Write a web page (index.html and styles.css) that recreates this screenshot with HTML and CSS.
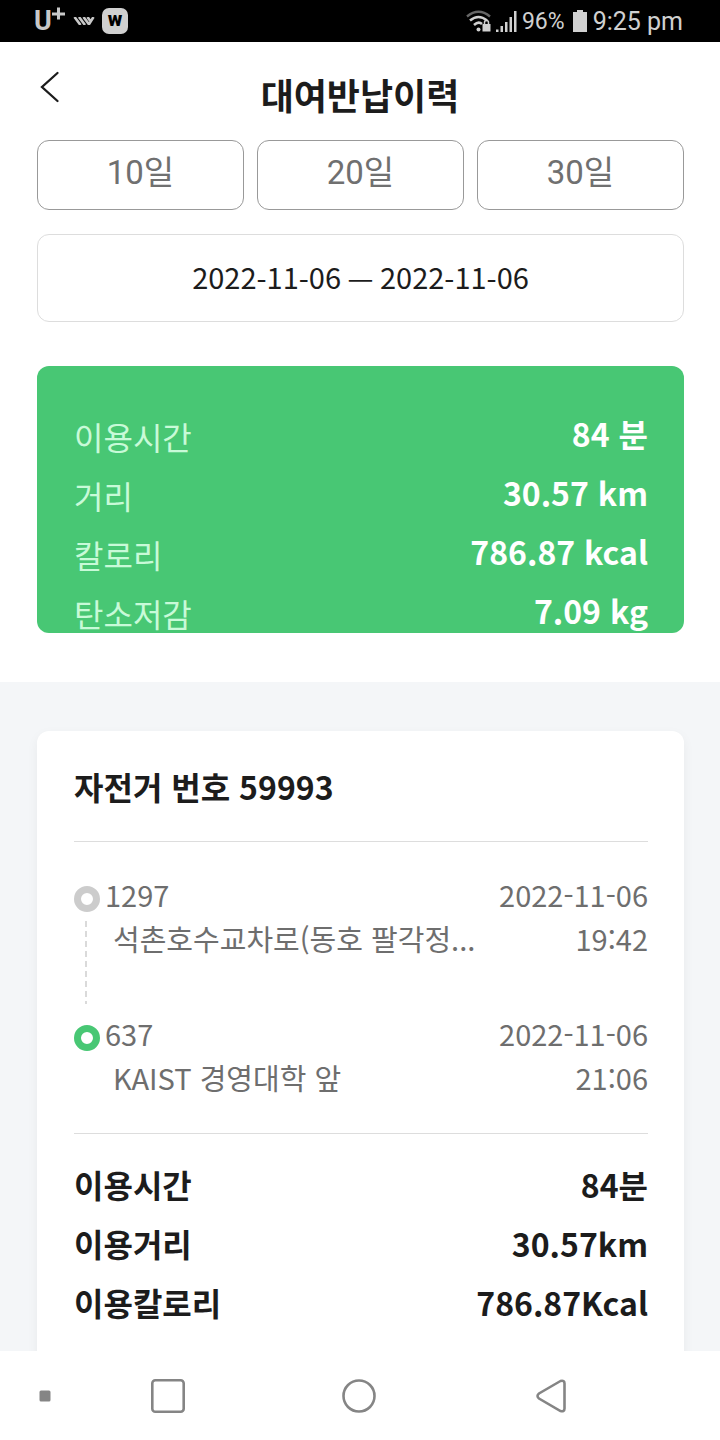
FILE: index.html
```html
<!DOCTYPE html>
<html lang="ko">
<head>
  <meta charset="utf-8">
  <meta name="viewport" content="width=device-width, initial-scale=1.0">
  <title>대여반납이력</title>
  <link rel="stylesheet" href="styles.css">
</head>
<body>
  <div class="status-bar">
    <div class="status-left">
      <div class="carrier">
        <span>U</span>
        <svg width="14" height="14" viewBox="0 0 14 14">
          <path d="M0 7h13M6.500 0.500v12" stroke="#c8c8c8" stroke-width="3"/>
        </svg>
      </div>
      <svg width="22" height="8" viewBox="0 0 22 8" stroke="#c8c8c8" stroke-width="2.600" fill="none">
        <path d="M1.500 0l6 8M6 0l6 8M10.500 0l6 8M14.500 0l3.500 5M20.500 0l-5 8"/>
      </svg>
      <svg class="badge" width="26" height="26" viewBox="0 0 26 26">
        <rect width="26" height="26" rx="7" fill="#d0d0d0"/>
        <text x="13" y="18" text-anchor="middle">w</text>
      </svg>
    </div>
    <div class="status-right">
      <svg width="25" height="22" viewBox="0 0 25 22" fill="none">
        <path d="M1 6.500Q12.500-3 24 6.500" stroke="#666" stroke-width="2.400"/>
        <path d="M4 10.500Q12.500 3.500 21 10.500M8 15Q12.500 11 16 14" stroke="#d0d0d0" stroke-width="2.600"/>
        <circle cx="12.500" cy="19.500" r="2" fill="#d0d0d0"/>
        <rect x="16.500" y="14" width="8" height="7.500" fill="#d0d0d0"/>
        <path d="M18.500 14v-1.500a2 2 0 0 1 4 0V14" stroke="#d0d0d0" stroke-width="1.500"/>
      </svg>
      <svg width="21" height="21" viewBox="0 0 21 21" fill="#d0d0d0">
        <path d="M0 18.500h2.500V21H0zM4.500 15H7v6H4.500zM9 11h2.500v10H9zM13.500 6H16v15h-2.500zM18 0h2.500v21H18z"/>
      </svg>
      <span class="battery-text">96%</span>
      <svg class="battery" width="14" height="22" viewBox="0 0 14 22" fill="#d0d0d0">
        <path d="M4 0h6v2h4v20H0V2h4z"/>
      </svg>
      <span class="clock">9:25 pm</span>
    </div>
  </div>

  <main class="content">
    <header class="header">
      <button class="back" type="button" aria-label="뒤로">
        <svg width="20" height="32" viewBox="0 0 20 32">
          <path d="M17.500 2L2 16l15.500 14" fill="none" stroke="#1c1c1c" stroke-width="2.300" stroke-linecap="round"/>
        </svg>
      </button>
      <h1 class="title">대여반납이력</h1>
    </header>

    <section class="search">
      <div class="period">
        <button class="period-btn" type="button">10일</button>
        <button class="period-btn" type="button">20일</button>
        <button class="period-btn" type="button">30일</button>
      </div>
      <button class="date-range" type="button">2022-11-06 — 2022-11-06</button>
      <dl class="summary">
        <div class="row"><dt>이용시간</dt><dd>84 분</dd></div>
        <div class="row"><dt>거리</dt><dd>30.57 km</dd></div>
        <div class="row"><dt>칼로리</dt><dd>786.87 kcal</dd></div>
        <div class="row"><dt>탄소저감</dt><dd>7.09 kg</dd></div>
      </dl>
    </section>

    <section class="history">
      <article class="card">
        <h2 class="bike">자전거 번호 59993</h2>
        <div class="route">
          <div class="stop stop-start">
            <div class="marker"><span class="dot"></span><span class="dash"></span></div>
            <div class="station">
              <p>1297</p>
              <p class="station-name">석촌호수교차로(동호 팔각정...</p>
            </div>
            <div class="time">
              <p>2022-11-06</p>
              <p>19:42</p>
            </div>
          </div>
          <div class="stop">
            <div class="marker"><span class="dot dot-end"></span></div>
            <div class="station">
              <p>637</p>
              <p class="station-name">KAIST 경영대학 앞</p>
            </div>
            <div class="time">
              <p>2022-11-06</p>
              <p>21:06</p>
            </div>
          </div>
        </div>
        <dl class="stats">
          <div class="row"><dt>이용시간</dt><dd>84분</dd></div>
          <div class="row"><dt>이용거리</dt><dd>30.57km</dd></div>
          <div class="row"><dt>이용칼로리</dt><dd>786.87Kcal</dd></div>
        </dl>
      </article>
    </section>
  </main>

  <nav class="nav-bar">
    <button type="button" aria-label="메뉴 고정">
      <svg width="12" height="12" viewBox="0 0 12 12"><rect x="0.500" y="0.500" width="11" height="11" rx="1.500" fill="#858585"/></svg>
    </button>
    <button type="button" aria-label="최근 앱">
      <svg width="34" height="34" viewBox="0 0 34 34"><rect x="1.300" y="1.300" width="31.400" height="31.400" rx="3" fill="none" stroke="#858585" stroke-width="2.600"/></svg>
    </button>
    <button type="button" aria-label="홈">
      <svg width="34" height="34" viewBox="0 0 34 34"><circle cx="17" cy="17" r="15.500" fill="none" stroke="#858585" stroke-width="2.600"/></svg>
    </button>
    <button type="button" aria-label="뒤로 가기">
      <svg width="30" height="34" viewBox="0 0 30 34"><path d="M24.500 2L3 14.500Q0 17 3 19.500L24.500 32Q28.500 33 28.500 29.500V4.500Q28.500 1 24.500 2z" fill="none" stroke="#858585" stroke-width="2.600"/></svg>
    </button>
  </nav>
</body>
</html>
```
FILE: styles.css
```css
* {
  box-sizing: border-box;
}
body {
  display: flex;
  flex-direction: column;
  height: 100vh;
  margin: 0;
  background-color: #fff;
  color: #1c1c1c;
  font-family: "Noto Sans CJK KR", sans-serif;
}
h1, h2, p, dl, dd {
  margin: 0;
}
button {
  padding: 0;
  border: 0;
  background: none;
  color: inherit;
  font-family: inherit;
  cursor: pointer;
}
svg {
  display: block;
}

/* status bar */
.status-bar {
  display: flex;
  flex: none;
  justify-content: space-between;
  align-items: center;
  height: 42px;
  padding: 0 37px 0 34px;
  background-color: #000;
  color: #d0d0d0;
  font-family: Roboto, sans-serif;
}
.status-left {
  display: flex;
  align-items: center;
  gap: 7px;
}
.status-right {
  display: flex;
  align-items: center;
  gap: 5px;
}
.carrier {
  display: flex;
  align-items: flex-start;
  color: #c8c8c8;
  font-size: 27px;
  font-weight: 700;
  line-height: 28px;
}
.badge text {
  fill: #000;
  font-size: 20px;
  font-weight: 900;
}
.battery-text {
  font-size: 23px;
}
.battery {
  margin: 0 1px 0 3px;
}
.clock {
  font-size: 25px;
}

.content {
  flex: 1;
  min-height: 0;
  overflow-y: auto;
  scrollbar-width: none;
  background-color: #f4f6f8;
}

/* title */
.header {
  display: grid;
  grid-template-columns: 60px 1fr 60px;
  height: 98px;
  padding-top: 20px;
  background-color: #fff;
}
.back {
  display: flex;
  justify-content: flex-end;
  align-items: center;
  height: 50px;
}
.title {
  font-size: 36px;
  font-weight: 700;
  line-height: 64px;
  text-align: center;
}

/* search */
.search {
  padding: 0 36px 49px 37px;
  background-color: #fff;
}
.period {
  display: grid;
  grid-template-columns: repeat(3, 1fr);
  gap: 13px;
  margin-bottom: 24px;
}
.period-btn {
  height: 70px;
  padding-bottom: 10px;
  border: 1px solid #999;
  border-radius: 12px;
  color: #707070;
  font-family: Roboto, "Noto Sans CJK KR", sans-serif;
  font-size: 33px;
}
.date-range {
  display: block;
  width: 100%;
  height: 88px;
  margin-bottom: 44px;
  padding-bottom: 4px;
  border: 1px solid #ddd;
  border-radius: 12px;
  font-size: 29px;
}

.row {
  display: flex;
  justify-content: space-between;
  font-size: 32px;
  line-height: 59px;
}
.row dd {
  font-weight: 700;
}
.summary {
  height: 267px;
  padding: 38px 36px 0 37px;
  border-radius: 12px;
  background-color: #48c774;
  color: #fff;
}
.summary dt {
  padding-top: 6px;
  color: #c8fad8;
  line-height: 53px;
}

/* history */
.history {
  padding: 49px 36px 49px 37px;
}
.card {
  padding: 0 36px 37px 37px;
  border-radius: 12px;
  background-color: #fff;
  box-shadow: 0 4px 12px rgba(0, 0, 0, 0.05);
}
.bike {
  padding: 25px 0;
  border-bottom: 1px solid #ddd;
  font-size: 32px;
  font-weight: 700;
  line-height: 60px;
}
.route {
  padding: 30px 0 34px;
  border-bottom: 1px solid #ddd;
  color: #6e6e6e;
  font-size: 29px;
  line-height: 44px;
}
.stop {
  display: flex;
  gap: 5px;
}
.stop-start {
  min-height: 139px;
}
.marker {
  display: flex;
  flex-direction: column;
  gap: 9px;
  padding: 14px 0 7px;
}
.dot {
  width: 26px;
  height: 26px;
  border: 7px solid #ccc;
  border-radius: 50%;
}
.dot-end {
  border-color: #48c774;
}
.dash {
  flex: 1;
  width: 2px;
  margin-left: 11px;
  background: repeating-linear-gradient(#dadada 0 6px, transparent 6px 10px);
}
.station {
  flex: 1;
}
.station-name {
  padding-left: 8px;
}
.time {
  text-align: right;
}
.stats {
  padding-top: 21px;
}
.stats dt {
  font-weight: 700;
}

/* navigation bar */
.nav-bar {
  display: grid;
  flex: none;
  grid-template-columns: 72px repeat(3, 1fr);
  height: 89px;
  padding-right: 73px;
  background-color: #fff;
}
.nav-bar button {
  display: flex;
  justify-content: center;
  align-items: center;
}
.nav-bar button:first-child {
  padding-left: 18px;
}
```
